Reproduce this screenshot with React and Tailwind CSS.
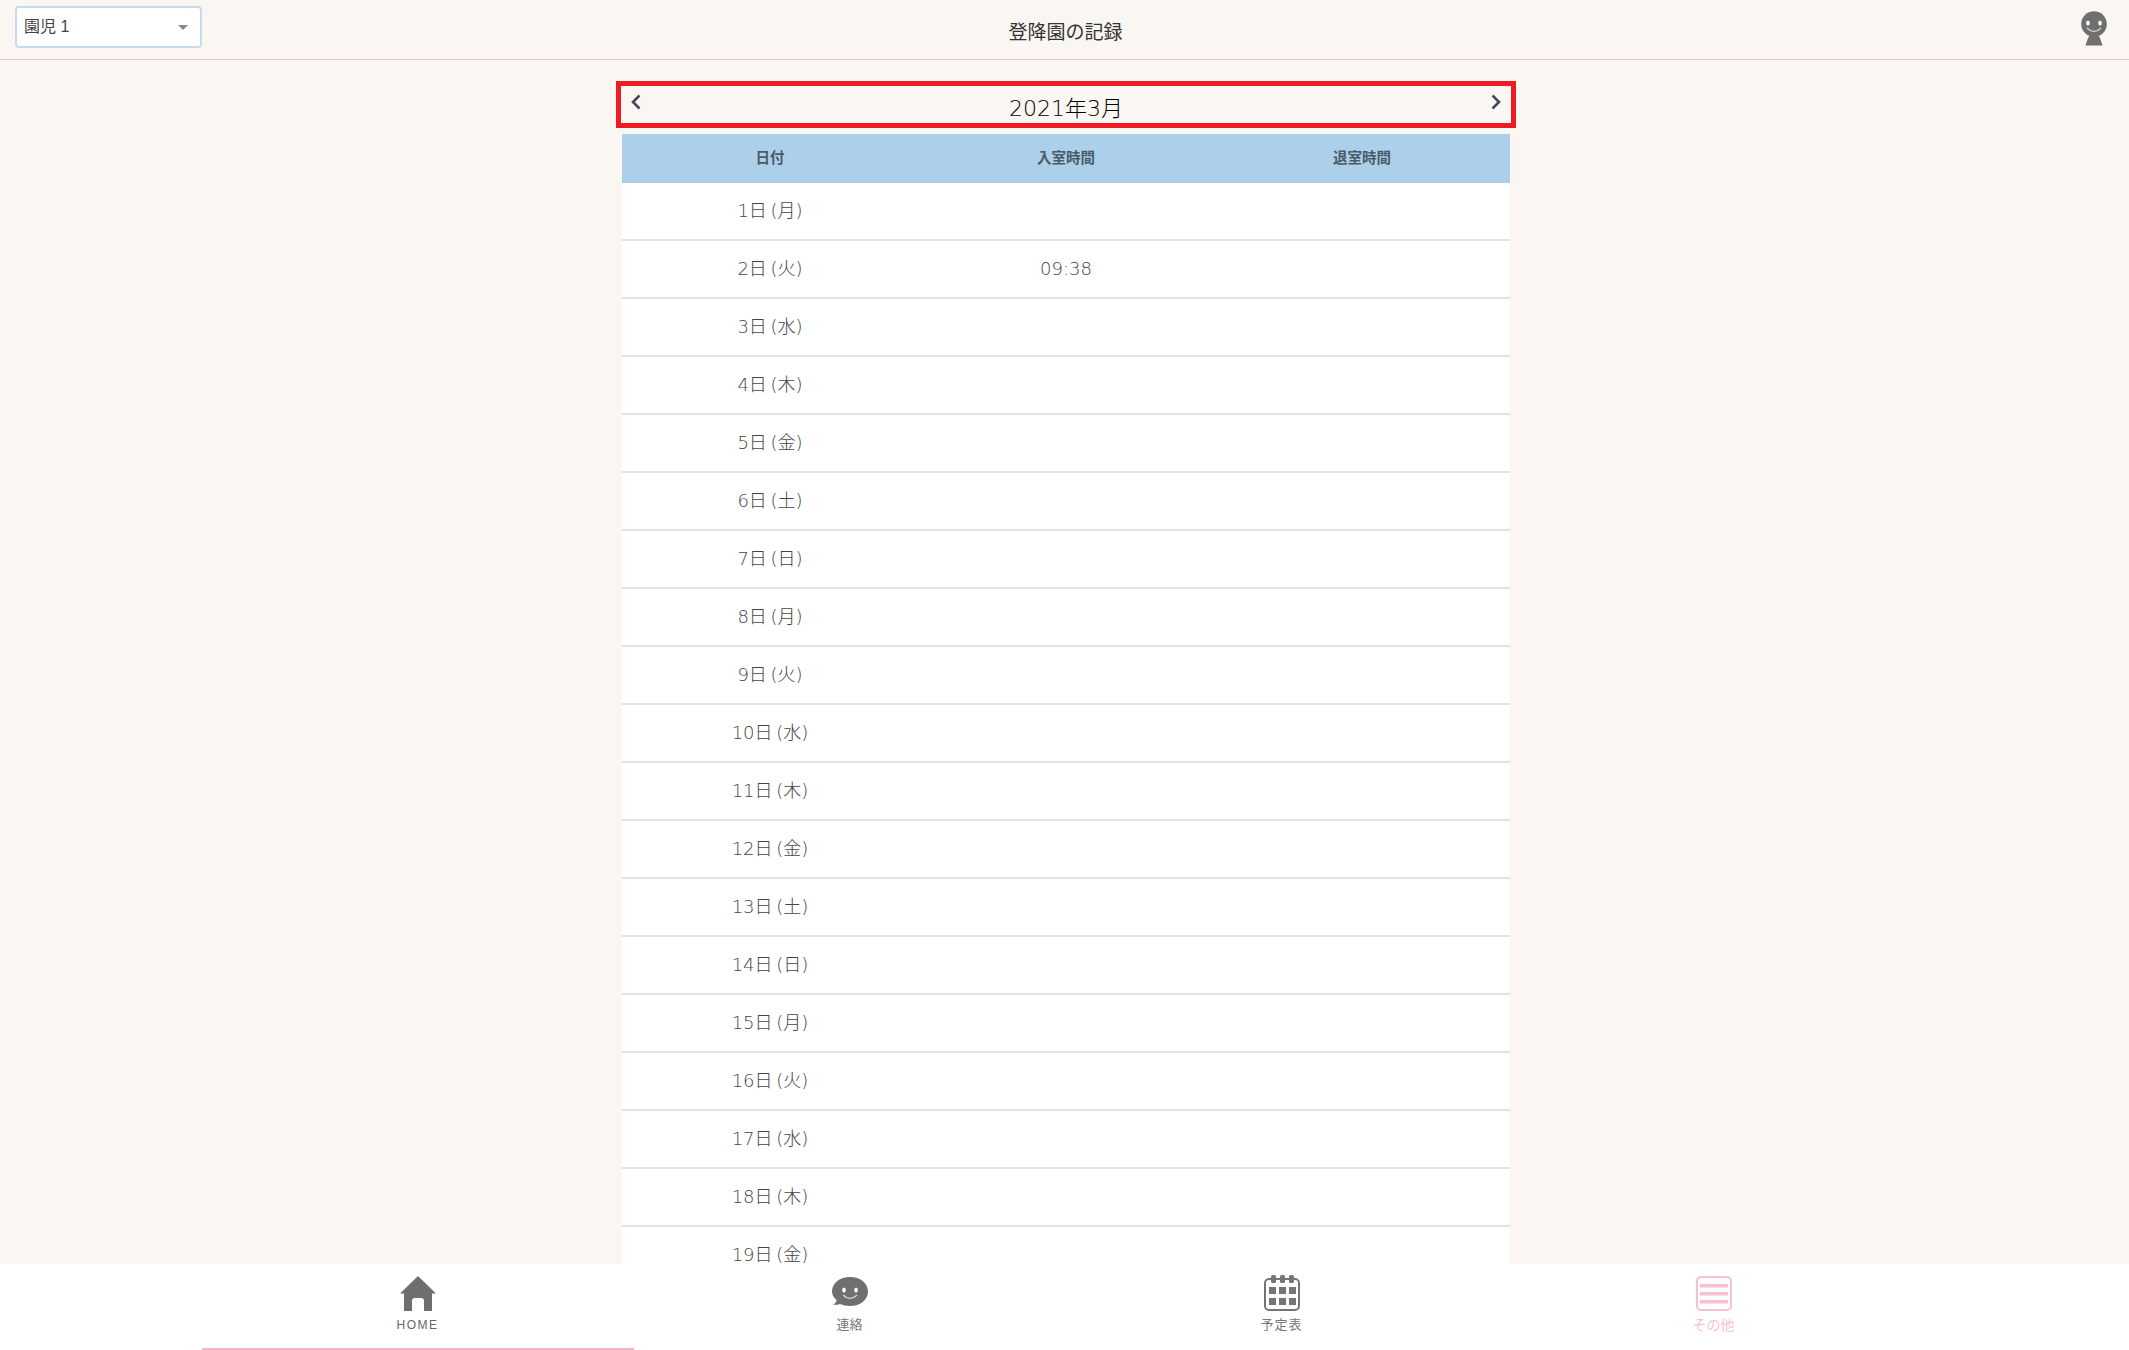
const WEEK = ['月', '火', '水', '木', '金', '土', '日'];
const DAYS = Array.from({ length: 31 }, (_, i) => ({
  label: `${i + 1}日 (${WEEK[i % 7]})`,
  in: i === 1 ? '09:38' : '',
  out: '',
}));

function Chevron({ dir }) {
  return (
    <svg width="12" height="16" viewBox="0 0 12 16" className="text-[#44465a]">
      <polyline
        points={dir === 'left' ? '9.500,1.500 3,8 9.500,14.500' : '2.500,1.500 9,8 2.500,14.500'}
        fill="none"
        stroke="currentColor"
        strokeWidth="2.600"
      />
    </svg>
  );
}

function Face({ cx, cy }) {
  return (
    <g>
      <ellipse cx={cx - 6} cy={cy - 1} rx="1.800" ry="2.500" fill="#fff" />
      <ellipse cx={cx + 6} cy={cy - 1} rx="1.800" ry="2.500" fill="#fff" />
      <path d={`M${cx - 7} ${cy + 4} Q${cx} ${cy + 11} ${cx + 7} ${cy + 4}`} fill="none" stroke="#d8d8d8" strokeWidth="1.200" />
    </g>
  );
}

function Avatar() {
  return (
    <svg width="26" height="35" viewBox="0 0 26 35">
      <path d="M4.500 34.500 Q6 29 9 23 H17 Q20 29 21.500 34.500 Z" fill="#6f6f6f" />
      <circle cx="13" cy="13" r="12.800" fill="#6f6f6f" />
      <Face cx={13} cy={13} />
    </svg>
  );
}

function HomeIcon() {
  return (
    <svg width="36" height="36" viewBox="0 0 36 36">
      <path d="M18 0 L36 17.500 H32 V35 H24 V25 Q24 22 21 22 H15 Q12 22 12 25 V35 H4 V17.500 H0 Z" fill="#6f6f6f" />
    </svg>
  );
}

function ChatIcon() {
  return (
    <svg width="36" height="31" viewBox="0 0 36 31">
      <path d="M18 0 C28 0 36 6 36 14.500 C36 23 28 29 18 29 C14 29 11 28 8 27 C5 28 3 28 1 27.500 C3 26.500 4.500 25 4.500 23 C2 21 0 18 0 14.500 C0 6 8 0 18 0 Z" fill="#6f6f6f" />
      <Face cx={18} cy={14} />
    </svg>
  );
}

function CalendarIcon() {
  const cells = [[5, 12], [15, 12], [25, 12], [5, 23], [15, 23], [25, 23]];
  return (
    <svg width="36" height="36" viewBox="0 0 36 36">
      <rect x="1" y="4" width="34" height="31" rx="4" fill="none" stroke="#757575" strokeWidth="2" />
      {[7, 16, 25].map((x) => (
        <rect key={x} x={x} y="0" width="5" height="8" rx="1.500" fill="#757575" />
      ))}
      {cells.map(([x, y]) => (
        <rect key={`${x}-${y}`} x={x} y={y} width="7" height="7" fill="#757575" />
      ))}
    </svg>
  );
}

function MenuIcon() {
  return (
    <svg width="36" height="35" viewBox="0 0 36 35">
      <rect x="1" y="1" width="34" height="33" rx="4" fill="none" stroke="#fbbfd2" strokeWidth="2" />
      {[8, 16, 24].map((y) => (
        <rect key={y} x="4" y={y} width="28" height="3.500" fill="#fbbfd2" />
      ))}
    </svg>
  );
}

export default function App() {
  return (
    <div className="h-[1350px] flex flex-col overflow-hidden bg-[#faf7f2] text-[#333] font-['Liberation_Sans','Noto_Sans_CJK_JP',sans-serif]">
      {/* Top bar */}
      <header className="h-[60px] shrink-0 grid grid-cols-3 items-center border-b border-[#f0c4cf] px-[15px]">
        <div className="flex">
          <div className="w-[187px] h-[42px] -mt-[5px] flex items-center justify-between pl-[7px] pr-[12px] bg-white border-2 border-[#c5dcee] rounded text-[16px] text-[#444]">
            <span>園児 1</span>
            <span className="w-0 h-0 border-x-[5px] border-x-transparent border-t-[5px] border-t-[#888]" />
          </div>
        </div>
        <h1 className="text-center text-[19px] font-normal ml-[2px] mt-[8px]">登降園の記録</h1>
        <div className="flex justify-end pr-[7px] -mt-[3px]">
          <Avatar />
        </div>
      </header>

      {/* Month + table */}
      <main className="flex-1 overflow-hidden pt-[21px] pl-[3px]">
        <div className="w-[900px] mx-auto">
          <div className="h-[47px] flex items-start justify-between border-[5px] border-[#ed1c24] px-[9px] pt-[8px]">
            <Chevron dir="left" />
            <span className="text-[22px] leading-[28px] pt-[1px] text-black font-['DejaVu_Sans','Noto_Sans_CJK_JP',sans-serif] font-extralight">2021年3月</span>
            <Chevron dir="right" />
          </div>

          <div className="w-[888px] mx-auto mt-[6px]">
            <div className="h-[49px] grid grid-cols-3 items-center bg-[#acd0ea] text-center text-[14.500px] font-bold text-[#4a5a68]">
              <div>日付</div>
              <div>入室時間</div>
              <div>退室時間</div>
            </div>
            {DAYS.map((d) => (
              <div key={d.label} className="h-[58px] pb-[2px] grid grid-cols-3 items-center bg-white border-b-2 border-[#e2e2e2] text-center text-[18px] text-[#444] [word-spacing:-2px] font-['DejaVu_Sans','Noto_Sans_CJK_JP',sans-serif] font-extralight">
                <div>{d.label}</div>
                <div>{d.in}</div>
                <div>{d.out}</div>
              </div>
            ))}
          </div>
        </div>
      </main>

      {/* Bottom nav */}
      <nav className="h-[86px] shrink-0 bg-white pl-[2px]">
        <div className="w-[1728px] h-full mx-auto grid grid-cols-4">
          <div className="flex flex-col items-center pt-[12px] border-b-2 border-[#f5b5c9]">
            <HomeIcon />
            <span className="mt-[5px] text-[12px] leading-[16px] tracking-[1.500px] text-[#666]">HOME</span>
          </div>
          <div className="flex flex-col items-center pt-[13px]">
            <ChatIcon />
            <span className="mt-[9px] text-[13px] leading-[16px] text-[#777]">連絡</span>
          </div>
          <div className="flex flex-col items-center pt-[11px]">
            <CalendarIcon />
            <span className="mt-[6px] text-[13px] leading-[16px] tracking-[1px] text-[#777]">予定表</span>
          </div>
          <div className="flex flex-col items-center pt-[12px]">
            <MenuIcon />
            <span className="mt-[6px] text-[14px] leading-[16px] text-[#fbbfd2]">その他</span>
          </div>
        </div>
      </nav>
    </div>
  );
}
